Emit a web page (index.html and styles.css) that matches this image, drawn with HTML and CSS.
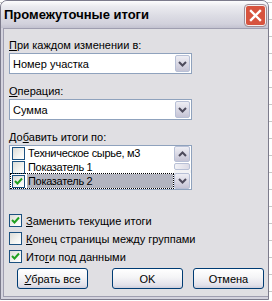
FILE: index.html
```html
<!DOCTYPE html>
<html lang="ru">
<head>
    <meta charset="UTF-8">
    <title>Промежуточные итоги</title>
    <link rel="stylesheet" href="styles.css">
</head>
<body>
    <div class="window">
        <div class="titlebar">
            <span class="title">Промежуточные итоги</span>
            <div class="closebtn">
                <svg width="13" height="13" viewBox="0 0 13 13">
                    <path d="M2 2 L11 11 M11 2 L2 11" stroke="#ffffff" stroke-width="2.4" stroke-linecap="square"/>
                </svg>
            </div>
        </div>
        <div class="frame">
            <div class="client">
                <div class="label"><u>П</u>ри каждом изменении в:</div>
                <div class="combo">
                    <span class="combo-text">Номер участка</span>
                    <span class="arrow-btn">
                        <svg width="9" height="6" viewBox="0 0 9 6"><path d="M1 1 L4.5 4.5 L8 1" fill="none" stroke="#4d4b5c" stroke-width="2"/></svg>
                    </span>
                </div>

                <div class="label"><u>О</u>перация:</div>
                <div class="combo">
                    <span class="combo-text">Сумма</span>
                    <span class="arrow-btn">
                        <svg width="9" height="6" viewBox="0 0 9 6"><path d="M1 1 L4.5 4.5 L8 1" fill="none" stroke="#4d4b5c" stroke-width="2"/></svg>
                    </span>
                </div>

                <div class="label">До<u>б</u>авить итоги по:</div>
                <div class="listbox">
                    <div class="items">
                        <div class="item"><span class="check"></span><span class="item-text">Техническое сырье, м3</span></div>
                        <div class="item"><span class="check"></span><span class="item-text">Показатель 1</span></div>
                        <div class="item selected">
                            <span class="check checked">
                                <svg width="9" height="9" viewBox="0 0 9 9"><path d="M1 4 L3.5 6.5 L8 1.5" fill="none" stroke="#21a121" stroke-width="2"/></svg>
                            </span>
                            <span class="item-text">Показатель 2</span>
                        </div>
                    </div>
                    <div class="scrollbar">
                        <span class="sb-btn">
                            <svg width="9" height="6" viewBox="0 0 9 6"><path d="M1 5 L4.5 1.5 L8 5" fill="none" stroke="#4d4b5c" stroke-width="2"/></svg>
                        </span>
                        <span class="sb-thumb"></span>
                        <span class="sb-track"></span>
                        <span class="sb-btn">
                            <svg width="9" height="6" viewBox="0 0 9 6"><path d="M1 1 L4.5 4.5 L8 1" fill="none" stroke="#4d4b5c" stroke-width="2"/></svg>
                        </span>
                    </div>
                </div>

                <div class="options">
                    <div class="option">
                        <span class="check checked">
                            <svg width="9" height="9" viewBox="0 0 9 9"><path d="M1 4 L3.5 6.5 L8 1.5" fill="none" stroke="#21a121" stroke-width="2"/></svg>
                        </span>
                        <span><u>З</u>аменить текущие итоги</span>
                    </div>
                    <div class="option">
                        <span class="check"></span>
                        <span><u>К</u>онец страницы между группами</span>
                    </div>
                    <div class="option">
                        <span class="check checked">
                            <svg width="9" height="9" viewBox="0 0 9 9"><path d="M1 4 L3.5 6.5 L8 1.5" fill="none" stroke="#21a121" stroke-width="2"/></svg>
                        </span>
                        <span>Ито<u>г</u>и под данными</span>
                    </div>
                </div>

                <div class="buttons">
                    <button class="btn btn-remove"><u>У</u>брать все</button>
                    <button class="btn btn-ok">OK</button>
                    <button class="btn">Отмена</button>
                </div>
            </div>
        </div>
    </div>
</body>
</html>
```

FILE: styles.css
```css
body {
    margin: 0;
    width: 272px;
    height: 301px;
    font-family: "Liberation Sans", Arial, sans-serif;
    font-size: 11px;
    color: #000;
    background: repeating-linear-gradient(#fff 0, #fff 2px, #c8c8c8 2px, #c8c8c8 3px, #fff 3px, #fff 17px);
}
.window {
    width: 267px;
    height: 298px;
    border: 1px solid #7c7b8c;
    border-radius: 7px 7px 0 0;
    background: #d4d3de;
    display: flex;
    flex-direction: column;
    overflow: hidden;
}
.titlebar {
    height: 27px;
    flex: none;
    display: flex;
    align-items: center;
    justify-content: space-between;
    padding: 0 2px 0 3px;
    background: linear-gradient(#fdfdfe 0%, #ebebf0 20%, #dcdce4 55%, #d2d1dc 85%, #c3c2d0 100%);
}
.title {
    font-weight: bold;
    font-size: 13px;
    color: #000;
}
.closebtn {
    width: 19px;
    height: 19px;
    flex: none;
    margin-top: 1px;
    border: 1px solid #f4f0f0;
    border-radius: 3px;
    outline: 1px solid #9f8f98;
    background-color: #d7533e;
    box-shadow: inset 0 0 0 10px #d7533e;
    display: flex;
    align-items: center;
    justify-content: center;
}
.frame {
    flex: 1;
    padding: 0 2px 2px 2px;
    display: flex;
}
.client {
    flex: 1;
    border: 1px solid #9f9eb0;
    background: #e0dfe3;
    padding: 10px 0 0 5px;
}
.label {
    line-height: 13px;
    height: 13px;
    margin-bottom: 1px;
}
.combo {
    width: 181px;
    height: 19px;
    border: 1px solid #8fa2bd;
    background: #fff;
    display: flex;
    align-items: center;
    justify-content: space-between;
    margin-bottom: 11px;
}
.combo-text {
    padding-left: 3px;
}
.arrow-btn, .sb-btn {
    width: 15px;
    height: 17px;
    box-sizing: border-box;
    margin-right: 1px;
    border: 1px solid #b8c0d6;
    border-radius: 2px;
    background: linear-gradient(#eeeef4, #d6d5e2 60%, #c5c4d5);
    display: flex;
    align-items: center;
    justify-content: center;
}
.listbox {
    width: 181px;
    height: 43px;
    border: 1px solid #8fa2bd;
    background: #fff;
    display: flex;
}
.items {
    flex: 1;
    padding: 0 1px 0 1px;
}
.item {
    height: 14px;
    display: flex;
    align-items: center;
}
.item .check {
    margin: 0 2px 0 1px;
}
.item-text {
    line-height: 14px;
    padding: 0 2px 0 1px;
    flex: 1;
    letter-spacing: -0.3px;
}
.item.selected {
    outline: 1px dotted #000;
    outline-offset: 0;
}
.item.selected .item-text {
    background: #b2b4bf;
}
.check {
    width: 11px;
    height: 11px;
    flex: none;
    border: 1px solid #1c5180;
    background: linear-gradient(135deg, #dcdcd7, #f4f4f1 60%, #fff);
    display: flex;
    align-items: center;
    justify-content: center;
}
.scrollbar {
    width: 17px;
    display: flex;
    flex-direction: column;
}
.sb-btn {
    width: 16px;
    height: 16px;
    margin: 0;
}
.sb-thumb {
    width: 16px;
    height: 7px;
    box-sizing: border-box;
    margin-top: 1px;
    border: 1px solid #b8c0d6;
    border-radius: 2px;
    background: linear-gradient(90deg, #f2f2f6, #dcdbe6);
}
.sb-track {
    flex: 1;
    background: #f3f3f5;
}
.options {
    margin-top: 24px;
}
.option {
    height: 13px;
    display: flex;
    align-items: center;
    gap: 4px;
    margin-bottom: 5px;
}
.buttons {
    margin-top: 5px;
    display: flex;
    padding-left: 8px;
}
.btn {
    width: 71px;
    height: 21px;
    padding: 0;
    font-family: "Liberation Sans", Arial, sans-serif;
    font-size: 11px;
    color: #000;
    border: 1px solid #003c74;
    border-radius: 3px;
    background: linear-gradient(#ffffff, #f4f4f6 45%, #e2e1ea 85%, #cfcedb);
    margin-right: 10px;
}
.btn-remove {
    margin-right: 24px;
}
```
